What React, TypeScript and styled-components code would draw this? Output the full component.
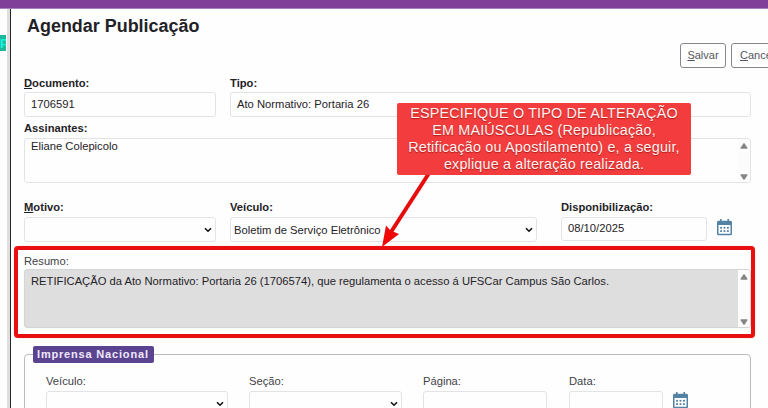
import React from "react";
import styled, { createGlobalStyle } from "styled-components";

const GlobalStyle = createGlobalStyle`
  * { box-sizing: border-box; }
  body { margin: 0; background: #fefefe; overflow: hidden; }
  body, input, select, button { font-family: "Liberation Sans", Arial, sans-serif; }
`;

const Screen = styled.div`
  position: relative;
  width: 768px;
  height: 408px;
  overflow: hidden;
  display: flex;
  flex-direction: column;
  background: #fefefe;
  color: #1f2226;
`;

const TopBar = styled.div`
  flex: none;
  height: 9px;
  background: #80409a;
  border-bottom: 1px solid #a980bb;
`;

const Body = styled.div`
  flex: 1;
  min-height: 0;
  display: flex;
`;

const PageBehind = styled.div`
  flex: none;
  width: 7px;
  padding-top: 26px;
  overflow: hidden;
`;

const Mark = styled.div`
  width: 6px;
  height: 16px;
  overflow: hidden;
  background: #20b69c;
  color: #12f5dc;
  font: bold 13px/17px "Liberation Sans", Arial, sans-serif;
`;

const DialogEdge = styled.div`
  flex: none;
  width: 4px;
  background: #dededc;
  border-right: 1px solid #26282a;
`;

const Dialog = styled.main`
  flex: 1;
  min-width: 0;
  padding: 7px 0 0 13px;
`;

const Title = styled.h1`
  margin: 0 0 0 3px;
  height: 20px;
  font-size: 17.95px;
  line-height: 20px;
  font-weight: bold;
`;

const Actions = styled.div`
  display: flex;
  gap: 5px;
  height: 25px;
  margin: 7px 0 10px 656px;
`;

const ActionButton = styled.button`
  flex: none;
  width: 46px;
  height: 25px;
  padding: 0 0 2px;
  border: 1px solid #85888c;
  border-radius: 3px;
  background: #fefefe;
  color: #54585e;
  font-size: 11px;
  line-height: 14px;
`;

const CancelButton = styled(ActionButton)`
  width: 60px;
  padding-left: 8px;
  text-align: left;
`;

const Row = styled.div<{ $top?: number }>`
  display: flex;
  margin-top: ${(p) => p.$top ?? 0}px;
`;

const Field = styled.div<{ $width: number; $gap?: number }>`
  flex: none;
  width: ${(p) => p.$width}px;
  margin-right: ${(p) => p.$gap ?? 0}px;
`;

const Label = styled.div<{ $bold?: boolean; $height?: number }>`
  height: ${(p) => p.$height ?? 16}px;
  line-height: 14px;
  font-size: 11.2px;
  font-weight: ${(p) => (p.$bold ? "bold" : "normal")};
  color: ${(p) => (p.$bold ? "#1f2226" : "#3e4247")};
  white-space: nowrap;
`;

const Box = styled.div<{ $height?: number; $pad?: number; $lift?: boolean }>`
  display: flex;
  align-items: center;
  justify-content: space-between;
  height: ${(p) => p.$height ?? 25}px;
  padding: 0 3px ${(p) => (p.$lift ? 2 : 0)}px ${(p) => p.$pad ?? 6}px;
  border: 1px solid #e2e3e4;
  border-radius: 3px;
  background: #fefefe;
  font-size: 11.22px;
  line-height: 14px;
  white-space: nowrap;
`;

const ListBox = styled.div<{ $filled?: boolean }>`
  display: flex;
  width: 727px;
  height: ${(p) => (p.$filled ? 59 : 45)}px;
  border: 1px solid ${(p) => (p.$filled ? "#d4d5d6" : "#e2e3e4")};
  border-radius: 3px;
  background: ${(p) => (p.$filled ? "#dedede" : "#fefefe")};
  font-size: 11.22px;
  line-height: 14px;
  overflow: hidden;
`;

const ListText = styled.div<{ $top: number }>`
  flex: 1;
  padding: ${(p) => p.$top}px 0 0 6px;
`;

const Scrollbar = styled.div`
  display: flex;
  flex-direction: column;
  justify-content: space-between;
  align-items: center;
  width: 12px;
  padding: 4px 1px 2px 0;
  background: #fcfcfc;
`;

const IconSlot = styled.div<{ $top: number }>`
  padding-top: ${(p) => p.$top}px;
  height: 0;
`;

const Fieldset = styled.section`
  width: 727px;
  height: 80px;
  margin-top: 26px;
  padding-left: 21px;
  border: 1px solid #b9babc;
  border-radius: 4px;
`;

const Legend = styled.div`
  width: 121px;
  height: 17px;
  margin: -9px 0 11px -13px;
  padding-left: 4px;
  border-radius: 2px;
  background: #5b448f;
  color: #f0e8fa;
  font-size: 11px;
  font-weight: bold;
  line-height: 16px;
  letter-spacing: 0.82px;
  white-space: nowrap;
`;

const Highlight = styled.div`
  position: absolute;
  left: 14px;
  top: 246px;
  width: 741px;
  height: 92px;
  border: 4px solid #e90f10;
  border-radius: 4px;
  box-shadow: 0 0 1px #f58a8a;
`;

const ArrowLayer = styled.svg`
  position: absolute;
  left: 376px;
  top: 170px;
`;

const Callout = styled.div`
  position: absolute;
  left: 397px;
  top: 103px;
  width: 294px;
  height: 72px;
  padding-top: 2px;
  border-radius: 2px;
  background: #f23c3d;
  color: #fff3f1;
  font-size: 14.4px;
  line-height: 17px;
  letter-spacing: 0.16px;
  text-align: center;
  white-space: nowrap;
  text-shadow: 0 1px 1px rgba(120, 0, 0, 0.55);
`;

const Chevron = () => (
  <svg width="8" height="6" viewBox="0 0 8 6">
    <path d="M1 1.2 L4 4.2 L7 1.2" fill="none" stroke="#111" strokeWidth="1.6" />
  </svg>
);

const ScrollArrows = () => (
  <Scrollbar>
    <svg width="8" height="6" viewBox="0 0 8 6">
      <path d="M3.5 0.3 H4.5 L7.6 5 Q7.5 5.7 7 5.7 H1 Q.5 5.7 .4 5Z" fill="#858585" />
    </svg>
    <svg width="8" height="6" viewBox="0 0 8 6">
      <path d="M3.5 5.7 H4.5 L7.6 1 Q7.5 .3 7 .3 H1 Q.5 .3 .4 1Z" fill="#858585" />
    </svg>
  </Scrollbar>
);

const Calendar = () => (
  <svg width="15" height="17" viewBox="0 0 15 17" display="block">
    <path
      fillRule="evenodd"
      fill="#5482a5"
      d="M3 0h1.6v1.7h5.8V0H12v1.7h1.5Q15 1.7 15 3.2v11.6q0 1.5-1.5 1.5h-12Q0 16.300 0 14.800V3.200Q0 1.700 1.500 1.700H3ZM1.500 6v8.200q0 .6.6.6h10.800q.6 0 .6-.6V6Z"
    />
    <g fill="#5482a5">
      {[3.2, 6.6, 10].map((x) =>
        [7.9, 11.2].map((y) => <rect key={`${x}-${y}`} x={x} y={y} width="1.8" height="1.8" />)
      )}
    </g>
  </svg>
);

export default function App() {
  return (
    <>
      <GlobalStyle />
      <Screen>
        <TopBar />
        <Body>
          <PageBehind>
            <Mark>P</Mark>
          </PageBehind>
          <DialogEdge />
          <Dialog>
            <Title>Agendar Publicação</Title>
            <Actions>
              <ActionButton><u>S</u>alvar</ActionButton>
              <CancelButton><u>C</u>ancelar</CancelButton>
            </Actions>
            <Row $top={-2}>
              <Field $width={192} $gap={14}>
                <Label $bold><u>D</u>ocumento:</Label>
                <Box $lift>1706591</Box>
              </Field>
              <Field $width={521}>
                <Label $bold>Tipo:</Label>
                <Box $lift>Ato Normativo: Portaria 26</Box>
              </Field>
            </Row>
            <Row $top={4}>
              <Field $width={727}>
                <Label $bold $height={17}>Assinantes:</Label>
                <ListBox>
                  <ListText $top={0}>Eliane Colepicolo</ListText>
                  <ScrollArrows />
                </ListBox>
              </Field>
            </Row>
            <Row $top={17}>
              <Field $width={192} $gap={14}>
                <Label $bold $height={17}><u>M</u>otivo:</Label>
                <Box><span /><Chevron /></Box>
              </Field>
              <Field $width={307} $gap={24}>
                <Label $bold $height={17}>Veículo:</Label>
                <Box $pad={3}>Boletim de Serviço Eletrônico<Chevron /></Box>
              </Field>
              <Field $width={146} $gap={10}>
                <Label $bold $height={17}>Disponibilização:</Label>
                <Box $height={24} $lift>08/10/2025</Box>
              </Field>
              <IconSlot $top={19}><Calendar /></IconSlot>
            </Row>
            <Row $top={12}>
              <Field $width={727}>
                <Label $height={15}>Resumo:</Label>
                <ListBox $filled>
                  <ListText $top={4}>
                    RETIFICAÇÃO da Ato Normativo: Portaria 26 (1706574), que regulamenta o acesso á UFSCar Campus São Carlos.
                  </ListText>
                  <ScrollArrows />
                </ListBox>
              </Field>
            </Row>
            <Fieldset>
              <Legend>Imprensa Nacional</Legend>
              <Row>
                <Field $width={182} $gap={21}>
                  <Label $height={17}>Veículo:</Label>
                  <Box><span /><Chevron /></Box>
                </Field>
                <Field $width={153} $gap={21}>
                  <Label $height={17}>Seção:</Label>
                  <Box><span /><Chevron /></Box>
                </Field>
                <Field $width={124} $gap={22}>
                  <Label $height={17}>Página:</Label>
                  <Box />
                </Field>
                <Field $width={94} $gap={10}>
                  <Label $height={17}>Data:</Label>
                  <Box />
                </Field>
                <IconSlot $top={18}><Calendar /></IconSlot>
              </Row>
            </Fieldset>
          </Dialog>
        </Body>
        <Highlight />
        <ArrowLayer width="60" height="80" viewBox="376 170 60 80">
          <path d="M428.500 174 L391 232" stroke="#e60c0d" strokeWidth="4" />
          <path d="M382 247 L386 225.500 L390.500 230.500 L399 234Z" fill="#ee0808" />
        </ArrowLayer>
        <Callout>
          ESPECIFIQUE O TIPO DE ALTERAÇÃO<br />
          EM MAIÚSCULAS (Republicação,<br />
          Retificação ou Apostilamento) e, a seguir,<br />
          explique a alteração realizada.
        </Callout>
      </Screen>
    </>
  );
}
